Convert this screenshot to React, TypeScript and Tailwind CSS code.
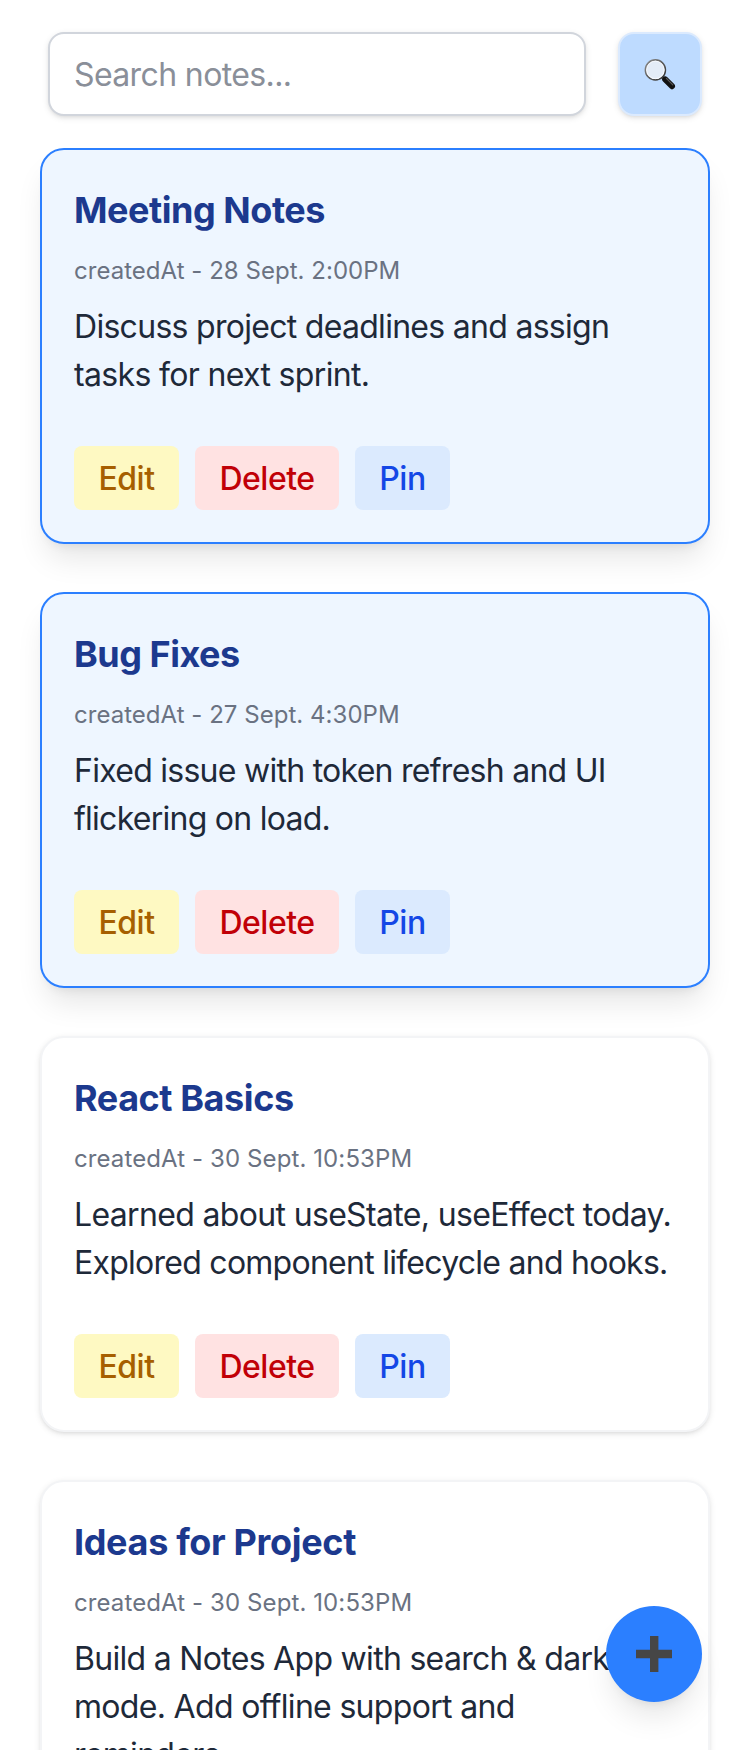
import React from "react";
import clsx from "clsx";

type Note = {
  title: string;
  titleTracking: string;
  date: string;
  dateTracking: string;
  lines: { text: string; tracking: string }[];
  pinned: boolean;
};

const notes: Note[] = [
  {
    title: "Meeting Notes",
    titleTracking: "tracking-[-0.46px]",
    date: "28 Sept. 2:00PM",
    dateTracking: "tracking-[0.03px]",
    lines: [
      { text: "Discuss project deadlines and assign", tracking: "tracking-[-0.71px]" },
      { text: "tasks for next sprint.", tracking: "tracking-[-0.66px]" },
    ],
    pinned: true,
  },
  {
    title: "Bug Fixes",
    titleTracking: "tracking-[-0.5px]",
    date: "27 Sept. 4:30PM",
    dateTracking: "tracking-[0.03px]",
    lines: [
      { text: "Fixed issue with token refresh and UI", tracking: "tracking-[-0.73px]" },
      { text: "flickering on load.", tracking: "tracking-[-0.74px]" },
    ],
    pinned: true,
  },
  {
    title: "React Basics",
    titleTracking: "tracking-[-0.43px]",
    date: "30 Sept. 10:53PM",
    dateTracking: "tracking-[0.1px]",
    lines: [
      { text: "Learned about useState, useEffect today.", tracking: "tracking-[-0.66px]" },
      { text: "Explored component lifecycle and hooks.", tracking: "tracking-[-0.74px]" },
    ],
    pinned: false,
  },
  {
    title: "Ideas for Project",
    titleTracking: "tracking-[-0.34px]",
    date: "30 Sept. 10:53PM",
    dateTracking: "tracking-[0.1px]",
    lines: [
      { text: "Build a Notes App with search & dark", tracking: "tracking-[-0.7px]" },
      { text: "mode. Add offline support and", tracking: "tracking-[-0.68px]" },
      { text: "reminders.", tracking: "tracking-[-0.7px]" },
    ],
    pinned: false,
  },
];

function Magnifier() {
  return (
    <svg width="32" height="32" viewBox="0 0 32 32" aria-hidden="true">
      <defs>
        <linearGradient id="rim" x1="0" y1="0" x2="1" y2="1">
          <stop offset="0" stopColor="#8d8d8d" />
          <stop offset="1" stopColor="#2e2e2e" />
        </linearGradient>
      </defs>
      <path d="M18.5 18.9 L21 21.4" stroke="#555" strokeWidth="3" />
      <path d="M21.2 21.4 L28 28.2" stroke="#111" strokeWidth="6" strokeLinecap="round" />
      <path d="M22.4 20.4 L28.8 26.8" stroke="#5c5c5c" strokeWidth="1.2" strokeLinecap="round" />
      <circle cx="11.4" cy="11.9" r="10" fill="#e4ecf7" stroke="url(#rim)" strokeWidth="1.6" />
      <circle cx="11.4" cy="11.9" r="8.8" fill="none" stroke="#fafcff" strokeWidth="0.9" />
    </svg>
  );
}

function NoteCard({ note }: { note: Note }) {
  return (
    <article
      className={clsx(
        "h-[396px] shrink-0 rounded-3xl border-2 p-8",
        note.pinned
          ? "border-[#2b7fff] bg-[#eef6ff] shadow-[0_20px_30px_-6px_rgba(0,0,0,0.1),0_8px_12px_-8px_rgba(0,0,0,0.1)]"
          : "border-gray-100 bg-white shadow-[0_2px_6px_0_rgba(0,0,0,0.1),0_2px_4px_-2px_rgba(0,0,0,0.1)]",
      )}
    >
      <h2 className={clsx("text-[36px] leading-[56px] font-bold text-[#1c398e]", note.titleTracking)}>{note.title}</h2>
      <p className={clsx("pt-[17px] text-[24px] leading-8 text-[#6a7282]", note.dateTracking)}>
        createdAt - {note.date}
      </p>
      <p className="pt-4 pb-[47px] text-[32px] leading-[48px] whitespace-nowrap text-[#1e2939]">
        {note.lines.map((line) => (
          <span key={line.text} className={clsx("block", line.tracking)}>
            {line.text}
          </span>
        ))}
      </p>
      <div className="flex gap-4 text-[32px] leading-[48px] font-medium tracking-[-0.5px]">
        <button className="h-16 w-[105px] rounded-lg bg-[#fef9c2] pt-0.5 text-[#a65f00]">Edit</button>
        <button className="h-16 w-36 rounded-lg bg-[#ffe2e2] pt-0.5 text-[#c10007]">Delete</button>
        <button className="h-16 w-[95px] rounded-lg bg-[#dbeafe] pt-0.5 text-[#1447e6]">Pin</button>
      </div>
    </article>
  );
}

export default function App() {
  return (
    <main className="relative h-[1750px] w-[750px] overflow-hidden bg-white font-[Inter,sans-serif]">
      <header className="flex gap-8 px-12 pt-8">
        <input
          className="h-[84px] w-[538px] rounded-2xl border-2 border-[#d1d5dc] bg-white px-6 text-[32px] tracking-[-0.62px] shadow-[0_2px_6px_0_rgba(0,0,0,0.1),0_2px_4px_-2px_rgba(0,0,0,0.1)] placeholder:text-[#8a8f99]"
          placeholder="Search notes..."
        />
        <button
          aria-label="Search"
          className="flex h-[84px] w-[84px] items-center justify-center rounded-2xl border-2 border-[#dbeafe] bg-[#bedbff] shadow-[0_2px_6px_0_rgba(0,0,0,0.1),0_2px_4px_-2px_rgba(0,0,0,0.1)]"
        >
          <Magnifier />
        </button>
      </header>
      <section className="flex flex-col gap-12 px-10 pt-8">
        {notes.map((note) => (
          <NoteCard key={note.title} note={note} />
        ))}
      </section>
      <button
        aria-label="Add note"
        className="absolute right-12 bottom-12 flex h-24 w-24 items-center justify-center rounded-full bg-[#2b7fff] shadow-[0_20px_30px_-6px_rgba(0,0,0,0.1),0_8px_12px_-8px_rgba(0,0,0,0.1)]"
      >
        <svg width="36" height="36" viewBox="0 0 36 36" aria-hidden="true">
          <path d="M14 0h8.4v13.8H36v8.4H22.4V36H14V22.2H0v-8.4h14z" fill="#464646" />
        </svg>
      </button>
    </main>
  );
}
